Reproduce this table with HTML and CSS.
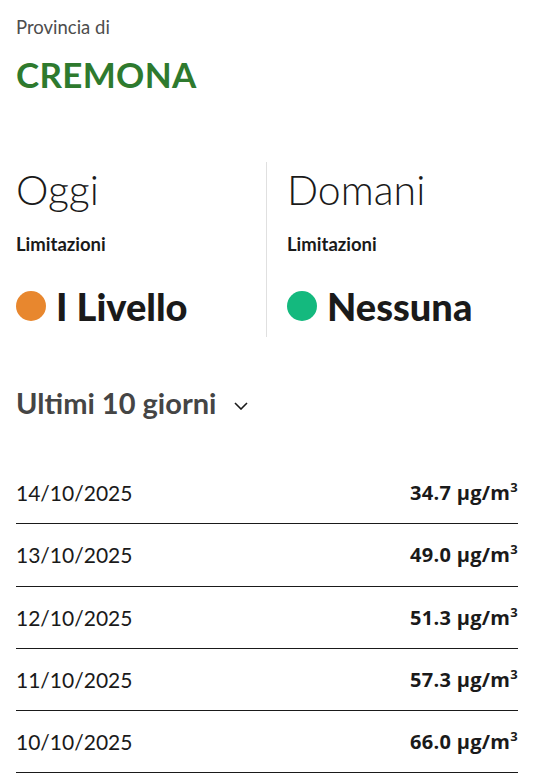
FILE: index.html
```html
<!DOCTYPE html>
<html lang="it">
<head>
<meta charset="utf-8">
<link rel="stylesheet" href="styles.css">
</head>
<body>
<main class="page">
  <header class="province">
    <p class="province-label">Provincia di</p>
    <h1 class="province-name">CREMONA</h1>
  </header>

  <section class="days">
    <div class="day">
      <h2 class="day-title">Oggi</h2>
      <p class="day-label">Limitazioni</p>
      <p class="day-status"><span class="dot dot-orange"></span>I Livello</p>
    </div>
    <div class="day day-right">
      <h2 class="day-title">Domani</h2>
      <p class="day-label">Limitazioni</p>
      <p class="day-status"><span class="dot dot-green"></span>Nessuna</p>
    </div>
  </section>

  <button class="toggle" type="button">
    <span class="toggle-text">Ultimi 10 giorni</span>
    <svg class="chevron" width="14" height="8" viewBox="0 0 14 8" aria-hidden="true"><path d="M1 1l6 6 6-6" fill="none" stroke="#1a1a1a" stroke-width="1.6"/></svg>
  </button>

  <ul class="history">
    <li class="row"><span class="date">14/10/2025</span><span class="value">34.7 µg/m<sup>3</sup></span></li>
    <li class="row"><span class="date">13/10/2025</span><span class="value">49.0 µg/m<sup>3</sup></span></li>
    <li class="row"><span class="date">12/10/2025</span><span class="value">51.3 µg/m<sup>3</sup></span></li>
    <li class="row"><span class="date">11/10/2025</span><span class="value">57.3 µg/m<sup>3</sup></span></li>
    <li class="row"><span class="date">10/10/2025</span><span class="value">66.0 µg/m<sup>3</sup></span></li>
  </ul>
</main>
</body>
</html>
```

FILE: styles.css
```css
* { box-sizing: border-box; }
html, body { margin: 0; padding: 0; background: #fff; }
body { font-family: Lato, "Open Sans", sans-serif; color: #1a1a1a; }
.page { padding: 14px 17px 0 16px; }

.province-label { margin: 0; font-size: 18.5px; line-height: 26px; color: #4d4d4d; }
.province-name { margin: 13px 0 0; font-size: 35px; line-height: 42px; font-weight: 700; color: #2e7a2e; letter-spacing: 0.3px; }

.days { display: grid; grid-template-columns: 250px 1fr; margin-top: 67px; }
.day { padding: 4px 0 9px; }
.day-right { border-left: 1px solid #e0e0e0; padding-left: 20px; }
.day-title { margin: 0; font-size: 41px; line-height: 48px; font-weight: 300; color: #1a1a1a; }
.day-label { margin: 19px 0 0; font-size: 18.5px; line-height: 22px; font-weight: 700; }
.day-status { margin: 29px 0 0; display: flex; align-items: center; gap: 10px; font-size: 38px; line-height: 44px; font-weight: 900; }
.dot { width: 30px; height: 30px; border-radius: 50%; flex: none; margin-top: -1px; }
.dot-orange { background: #e8872e; }
.dot-green { background: #14b97e; }

.toggle { margin: 49px 0 0; padding: 0; border: 0; background: none; display: flex; align-items: center; gap: 18px; font: inherit; cursor: pointer; }
.toggle-text { font-size: 29px; line-height: 34px; font-weight: 700; color: #454545; }
.chevron { margin-top: 5px; }

.history { list-style: none; margin: 42px 0 0; padding: 0; }
.row { display: flex; justify-content: space-between; align-items: center; height: 62.3px; border-bottom: 1px solid #1a1a1a; }
.date { font-size: 21px; font-weight: 400; color: #1a1a1a; }
.value { font-family: "Open Sans", sans-serif; font-size: 20px; font-weight: 700; letter-spacing: 0.3px; color: #1a1a1a; }
.value sup { font-size: 13px; line-height: 0; vertical-align: 8px; }
```
